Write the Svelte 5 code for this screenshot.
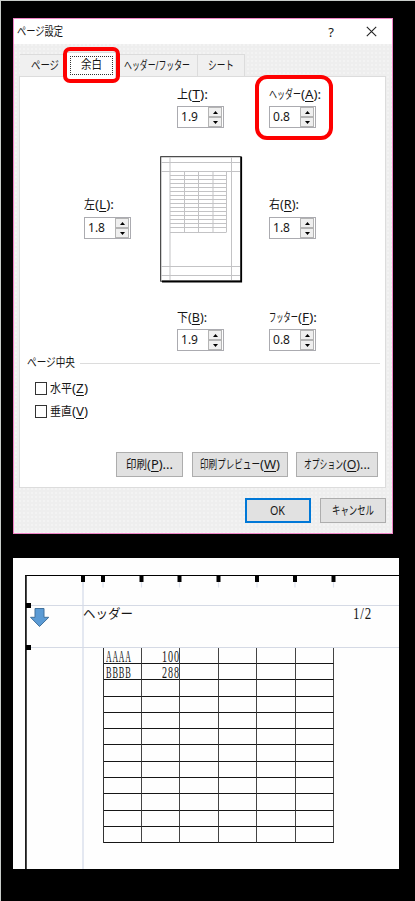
<script>
  // Squeezes a piece of text horizontally so that it takes exactly the given width.
  function fit(node, width) {
    const natural = node.getBoundingClientRect().width;
    if (natural) {
      node.style.transform = `scaleX(${width / natural})`;
      node.style.marginRight = `${width - natural}px`;
    }
  }

  const fields = [
    { area: 'top', name: '上', key: 'T', value: '1.9', w: 11, t: 20 },
    { area: 'head', name: 'ヘッダー', key: 'A', value: '0.8', w: 32, t: 20 },
    { area: 'left', name: '左', key: 'L', value: '1.8', w: 11, t: 19 },
    { area: 'right', name: '右', key: 'R', value: '1.8', w: 11, t: 19 },
    { area: 'bottom', name: '下', key: 'B', value: '1.9', w: 11, t: 19 },
    { area: 'foot', name: 'フッター', key: 'F', value: '0.8', w: 29, t: 19 }
  ];
  const checks = [
    { name: '水平', key: 'Z' },
    { name: '垂直', key: 'V' }
  ];
  const actions = [
    { name: '印刷', key: 'P', tail: ')...', w: 21, t: 26, size: 67 },
    { name: '印刷プレビュー', key: 'W', tail: ')', w: 60, t: 20, size: 96 },
    { name: 'オプション', key: 'O', tail: ')...', w: 39, t: 27, size: 82 }
  ];
  const rows = [
    ['AAAA', '100'],
    ['BBBB', '288'],
    ...Array.from({ length: 10 }, () => ['', ''])
  ];
  const ticks = [70, 90, 128.5, 166.5, 205.5, 244, 282, 320.5];
  const miniRows = Array.from({ length: 15 }, (_, i) => 15.5 + i * 4);
</script>

{#snippet label(name, key, tail, w, t)}
  <span class="pair"><span class="fit" use:fit={w}>{name}</span><span class="fit" use:fit={t}>(<u>{key}</u>{tail}</span></span>
{/snippet}

<main>
  <section class="dialog">
    <header>
      <span class="fit" use:fit={46}>ページ設定</span>
      <span class="help">?</span>
      <svg class="close" width="11" height="11" viewBox="0 0 11 11"><path d="M.8.8l9.4 9.4M10.2.8L.8 10.2" fill="none" stroke="#222" stroke-width="1.1" /></svg>
    </header>

    <nav>
      <div class="tab first"><span class="fit" use:fit={28}>ページ</span></div>
      <div class="tab active"><div class="focus"><span class="fit" use:fit={21}>余白</span></div><i class="mark"></i></div>
      <div class="tab third"><span class="fit" use:fit={66}>ヘッダー/フッター</span></div>
      <div class="tab last"><span class="fit" use:fit={26}>シート</span></div>
    </nav>

    <div class="panel">
      <div class="margins">
        {#each fields as f}
          <div class="field {f.area}">
            <div class="name">{@render label(f.name, f.key, '):', f.w, f.t)}</div>
            <div class="spin">
              <span class="fit value" use:fit={17}>{f.value}</span>
              <div class="steps">
                <b><svg width="5" height="3" viewBox="0 0 5 3"><path d="M0 3L2.5 0 5 3z" /></svg></b>
                <b><svg width="5" height="3" viewBox="0 0 5 3"><path d="M0 0L2.5 3 5 0z" /></svg></b>
              </div>
            </div>
            {#if f.area === 'head'}<i class="mark big"></i>{/if}
          </div>
        {/each}
        <svg class="preview" width="83" height="127" viewBox="0 0 83 127">
          <rect x=".7" y=".7" width="80.5" height="124.5" fill="#fff" stroke="#222" />
          <g stroke="#c3c3c5" fill="none">
            <path d="M1 6.5h80M1 15.5h80M1 110.5h80M1 119.5h80M10 1v124M71.5 1v124" />
            {#each miniRows as y}<path d="M10 {y}h56.500" />{/each}
            <path d="M10 76.500h56.500M24.500 15v61M38.500 15v61M53 15v61M66.500 15v61" />
          </g>
          <path d="M81.200 1v124.500H2" fill="none" stroke="#000" stroke-width="1.800" />
        </svg>
      </div>

      <div class="legend"><span class="fit" use:fit={48}>ページ中央</span><hr /></div>
      {#each checks as c}
        <div class="check"><i></i>{@render label(c.name, c.key, ')', 22, 16)}</div>
      {/each}

      <div class="actions">
        {#each actions as a}
          <button style="width:{a.size}px">{@render label(a.name, a.key, a.tail, a.w, a.t)}</button>
        {/each}
      </div>
    </div>

    <footer>
      <button class="ok"><span class="fit" use:fit={15}>OK</span></button>
      <button><span class="fit" use:fit={42}>キャンセル</span></button>
    </footer>
  </section>

  <section class="sheet">
    <svg class="guides" width="386" height="311" viewBox="0 0 386 311">
      <path d="M70 18v293" stroke="#e4e8f1" stroke-width="2" />
      <path d="M13 47.500h373M13 89.500h373" stroke="#d5dae5" />
      {#each ticks as x}
        <path d="M{x} 24v5.500" stroke="#dce2ee" stroke-width="1.200" />
        <rect x={x - 2} y="18" width="4" height="6" />
      {/each}
      <path d="M12 17.500h374" stroke="#000" />
      <path d="M12.900 17v294" stroke="#111" stroke-width="1.700" />
      <rect x="13" y="45" width="5" height="5" /><rect x="13" y="87" width="5" height="5" />
      <path d="M22 50.500h9v8.800h4.800L26.500 68.500l-9-9.200H22z" fill="#5b9bd5" stroke="#41719c" />
    </svg>
    <div class="running">
      <span class="fit" use:fit={50}>ヘッダー</span>
      <span class="fit" use:fit={19}>1/2</span>
    </div>
    <div class="table">
      {#each rows as r}
        {#each Array(6) as _, c}
          <div class="cell" class:num={c === 1}>
            {#if r[c]}<span class="fit" use:fit={c ? 18 : 25.5}>{r[c]}</span>{/if}
          </div>
        {/each}
      {/each}
    </div>
  </section>
</main>

<style>
  :global(body) { margin: 0; background: #000; }
  main {
    box-sizing: border-box; width: 415px; height: 901px; overflow: hidden;
    display: flex; flex-direction: column; gap: 24px; padding: 17px 0 0 12px;
    background: #000; border: solid #c9cdca; border-width: 1px 0 0 1px;
    font: 12px/14px "Noto Sans", "Noto Sans CJK JP", sans-serif; color: #161616;
  }
  .fit { display: inline-block; flex: none; white-space: nowrap; transform-origin: 0 50%; line-height: 14px; }
  .pair { display: flex; }
  u { text-underline-offset: 1.5px; text-decoration-thickness: 1px; text-decoration-skip-ink: none; }
  .dialog {
    box-sizing: border-box; width: 380px; height: 516px; border: 1px solid #ef83c6;
    background: #eee radial-gradient(circle, #f3f3f3 0.8px, transparent 1px) 0 0 / 4px 4px;
    display: flex; flex-direction: column;
  }
  header { height: 25px; background: #fff; display: flex; align-items: center; padding: 0 15px 0 3px; flex: none; }
  .help { margin-left: auto; font-size: 13px; margin-right: 32px; }
  nav { display: flex; height: 32px; padding: 10px 0 0 6px; box-sizing: border-box; flex: none; }
  .tab {
    box-sizing: border-box; height: 22px; border-top: 1px solid #dcdcdc; border-right: 1px solid #dcdcdc;
    background: #f0f0f0; padding-top: 4px; flex: none;
  }
  .first { width: 47px; padding-left: 11px; }
  .third { width: 82px; padding-left: 8px; }
  .last { width: 47px; padding-left: 10px; }
  .active { width: 49px; height: 25px; margin-top: -2px; background: #fff; position: relative; padding: 3px 0 0 3px; z-index: 1; }
  .focus { box-sizing: border-box; width: 43px; height: 19px; border: 1px dotted #333; padding: 1px 0 0 10px; }
  .mark { position: absolute; box-sizing: border-box; border: 4px solid #fe0000; border-radius: 7px; left: -4px; top: -6px; width: 57px; height: 36px; }
  .panel { box-sizing: border-box; width: 367px; height: 412px; margin-left: 5px; border: 1px solid #dcdcdc; background: #fff; flex: none; }
  .margins {
    height: 274px; display: grid; padding: 11px 0 0 64px; box-sizing: border-box;
    grid-template: "c1 top head" 110px "left page right" 113px "c2 bottom foot" 40px / 93px 92px 60px;
  }
  .field { position: relative; display: flex; flex-direction: column; gap: 4px; width: 47px; }
  .left, .right { gap: 5px; }
  .top { grid-area: top; } .head { grid-area: head; } .left { grid-area: left; }
  .right { grid-area: right; } .bottom { grid-area: bottom; } .foot { grid-area: foot; }
  .name { height: 14px; }
  .spin { box-sizing: border-box; width: 47px; height: 22px; border: 1px solid #ababb0; display: flex; justify-content: space-between; align-items: center; padding-left: 3px; background: #fff; }
  .value { font-size: 12.5px; }
  .steps { width: 14px; height: 20px; display: flex; flex-direction: column; margin-right: 1px; flex: none; }
  .steps b { flex: 1; box-sizing: border-box; border: 1px solid #b4b4b4; background: #efefef; display: flex; align-items: center; justify-content: center; }
  .spin svg { display: block; fill: #000; }
  .big { left: -14px; top: -13px; width: 78px; height: 65px; border-radius: 12px; }
  .preview { grid-area: page; margin: -42px 0 0 -17px; }
  .legend { display: flex; height: 26px; align-items: center; padding-left: 7px; margin-top: -1px; }
  hr { border: 0; height: 1px; background: #dcdcdc; margin: 0 5px 0 5px; flex: 1; }
  .check { height: 23px; display: flex; align-items: center; padding-left: 15px; gap: 3px; position: relative; top: 1px; }
  .check i { box-sizing: border-box; width: 12px; height: 13px; border: 1px solid #333; background: #fff; }
  .actions { display: flex; gap: 8.500px; padding: 30px 0 0 96px; }
  button {
    box-sizing: border-box; height: 25px; width: 66px; border: 1px solid #adadad; background: #e1e1e1;
    padding: 0 0 0 11px; font: inherit; color: #161616; text-align: left; flex: none; white-space: nowrap;
  }
  .actions button { padding-left: 7px; }
  .actions button:first-child { padding-left: 9px; }
  footer { display: flex; gap: 9px; padding: 10px 0 0 231px; }
  footer .ok { border: 2px solid #0078d7; padding-left: 23px; }
  .sheet { position: relative; width: 386px; height: 311px; background: #fefefe; flex: none; font-family: "Liberation Serif", "Noto Sans CJK JP", serif; }
  .guides { position: absolute; inset: 0; }
  .running { position: relative; height: 90px; box-sizing: border-box; display: flex; padding: 49px 0 0 70px; font-size: 13px; }
  .running .fit + .fit { font-size: 16px; margin-left: 219.5px; letter-spacing: 1px; }
  .table {
    position: relative; display: grid; margin-left: 90px; width: 231px; border-left: 1px solid #333;
    box-sizing: border-box; grid-template-columns: 38px 38px 39px 38px 39px 38px;
    grid-template-rows: 16px 16px 17px 16px 16px 16px 17px 16px 16px 17px 16px 16px;
  }
  .cell { border: solid #161616; border-width: 0 1px 1px 0; border-right-color: #444; padding-left: 2px; font-size: 16px; box-sizing: border-box; line-height: 14px; height: 100%; overflow: hidden; }
  .cell .fit { line-height: 15px; vertical-align: top; margin-top: 1px; letter-spacing: 1.5px; }
  .num { padding-left: 20px; }
</style>
